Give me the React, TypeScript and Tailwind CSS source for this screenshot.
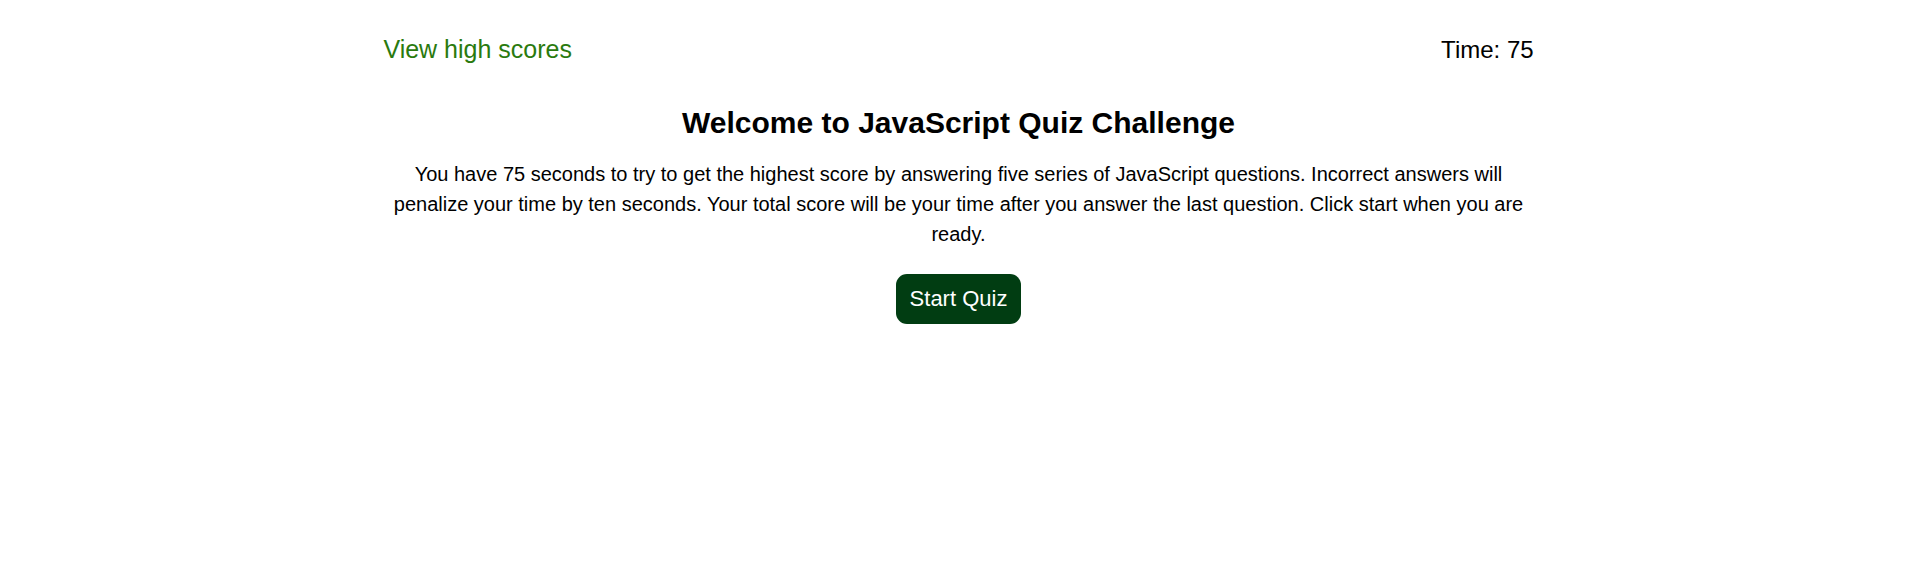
/**
 * App.tsx
 *
 * JavaScript quiz start screen.
 *  - Header: "View high scores" link (left) + timer (right)
 *  - Intro: title, rules paragraph, start button
 */

export default function App() {
  return (
    <div className="min-h-screen bg-white font-['Liberation_Sans',Arial,sans-serif] text-black">
      <div className="mx-auto w-[60%]">
        {/* Header row */}
        <header className="flex items-baseline justify-between pt-[35px]">
          <a href="#" className="text-[25px] leading-[28px] text-[#2a7a0e]">
            View high scores
          </a>
          <p className="text-[24px] leading-[28px]">Time: 75</p>
        </header>

        {/* Intro card */}
        <main className="mt-[42px] flex flex-col items-center text-center">
          <h1 className="text-[30px] font-bold leading-[34px]">
            Welcome to JavaScript Quiz Challenge
          </h1>
          <p className="mt-[19px] text-[20px] leading-[30px]">
            You have 75 seconds to try to get the highest score by answering
            five series of JavaScript questions. Incorrect answers will
            penalize your time by ten seconds. Your total score will be your
            time after you answer the last question. Click start when you are
            ready.
          </p>
          <button className="mt-[25px] h-[50px] rounded-[11px] bg-[#013d12] px-[14px] text-[22px] leading-[26px] text-white">
            Start Quiz
          </button>
        </main>
      </div>
    </div>
  );
}
